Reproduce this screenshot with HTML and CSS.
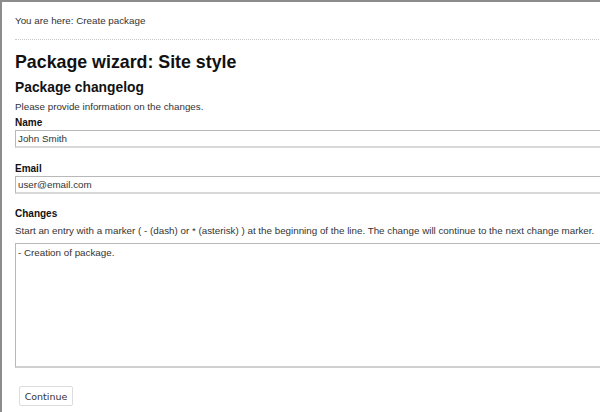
FILE: index.html
```html
<!DOCTYPE html>
<html>
<head>
<meta charset="utf-8">
<link rel="stylesheet" href="styles.css">
</head>
<body>
<div class="frame">
  <div class="content">
    <div class="breadcrumb">You are here: Create package</div>
    <h1 class="title">Package wizard: Site style</h1>
    <h2 class="subtitle">Package changelog</h2>
    <p class="intro">Please provide information on the changes.</p>
    <div class="field field-name">
      <label class="label">Name</label>
      <input class="text-input" type="text" value="John Smith">
    </div>
    <div class="field field-email">
      <label class="label">Email</label>
      <input class="text-input" type="text" value="user@email.com">
    </div>
    <div class="field">
      <label class="label">Changes</label>
      <p class="help">Start an entry with a marker ( - (dash) or * (asterisk) ) at the beginning of the line. The change will continue to the next change marker.</p>
      <textarea class="text-area">- Creation of package.</textarea>
    </div>
    <div class="actions">
      <button class="button" type="button">Continue</button>
    </div>
  </div>
</div>
</body>
</html>
```

FILE: styles.css
```css
html, body {
  margin: 0;
  padding: 0;
  background: #fff;
  overflow: hidden;
}
body {
  font-family: "Liberation Sans", Arial, sans-serif;
  color: #222;
}
.frame {
  border-top: 2px solid #8c8c8c;
  border-left: 2px solid #8c8c8c;
  height: 410px;
  overflow: hidden;
}
.content {
  padding-left: 13px;
  width: 620px;
}
.breadcrumb {
  font-size: 9.8px;
  color: #333;
  padding-top: 13px;
  height: 24px;
  line-height: 12px;
  border-bottom: 1px dotted #c8c8c8;
}
.title {
  font-size: 17.8px;
  font-weight: bold;
  color: #111;
  margin: 10px 0 0 0;
  line-height: 24px;
}
.subtitle {
  font-size: 13.8px;
  font-weight: bold;
  color: #111;
  margin: 5px 0 0 0;
  line-height: 18px;
}
.intro {
  font-size: 9.8px;
  color: #333;
  margin: 3px 0 0 0;
  line-height: 14px;
}
.field {
  margin-bottom: 0;
}
.field-name {
  margin-bottom: 14px;
}
.field-email {
  margin-bottom: 13px;
}
.label {
  display: block;
  font-size: 10px;
  font-weight: bold;
  color: #111;
  line-height: 14px;
  margin-top: 2px;
}
.text-input {
  display: block;
  box-sizing: border-box;
  width: 620px;
  height: 18px;
  margin: 0;
  padding: 0 2px;
  border: 1px solid #b8b8b8;
  border-bottom: 2px solid #d8d8d8;
  font-family: "Liberation Sans", Arial, sans-serif;
  font-size: 9.8px;
  color: #333;
  background: #fff;
  outline: none;
}
.help {
  font-size: 9.8px;
  color: #333;
  margin: 3px 0 0 0;
  line-height: 14px;
  white-space: nowrap;
}
.text-area {
  display: block;
  box-sizing: border-box;
  width: 620px;
  height: 125px;
  margin: 5px 0 0 0;
  padding: 3px 2px;
  border: 1px solid #b8b8b8;
  border-bottom: 2px solid #d0d0d0;
  font-family: "Liberation Sans", Arial, sans-serif;
  font-size: 9.8px;
  line-height: 12px;
  color: #333;
  resize: none;
  background: #fff;
  outline: none;
}
.actions {
  padding-left: 4px;
  margin-top: 18px;
}
.button {
  box-sizing: border-box;
  display: block;
  font-family: "DejaVu Sans", Verdana, sans-serif;
  font-size: 9.5px;
  color: #333;
  background: #fff;
  border: 1px solid #dcdcdc;
  border-radius: 2px;
  padding: 0 4px;
  height: 20px;
  width: 54px;
}
```
